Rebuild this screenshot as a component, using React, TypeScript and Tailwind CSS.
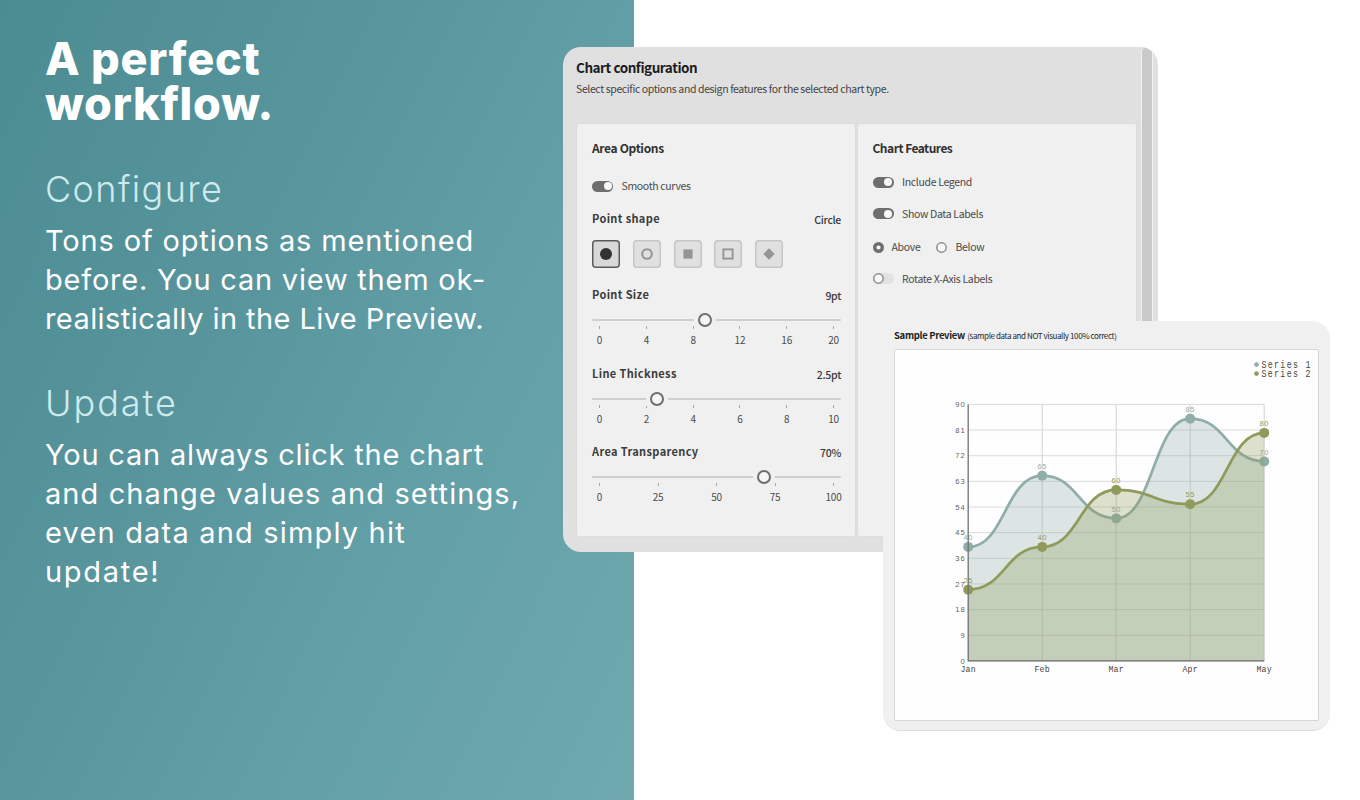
import type { ReactNode } from 'react'

interface SliderProps {
  label: string
  value: string
  percent: number
  ticks: number[]
}

interface Series {
  name: string
  color: string
  values: number[]
}

const months = ['Jan', 'Feb', 'Mar', 'Apr', 'May']

const series: Series[] = [
  { name: 'Series 1', color: '#8fada9', values: [40, 65, 50, 85, 70] },
  { name: 'Series 2', color: '#8f9a5b', values: [25, 40, 60, 55, 80] },
]

const PLOT = { left: 73.2, top: 54.4, width: 296, height: 256.5, max: 90 }

const xAt = (i: number) => PLOT.left + (i * PLOT.width) / (months.length - 1)
const yAt = (v: number) => PLOT.top + PLOT.height * (1 - v / PLOT.max)

// Smooth line with horizontal tangents at every point
function curve(values: number[]) {
  return values.reduce((d, v, i) => {
    if (i === 0) return `M${xAt(0)},${yAt(v)}`
    const mid = (xAt(i - 1) + xAt(i)) / 2
    return `${d} C${mid},${yAt(values[i - 1])} ${mid},${yAt(v)} ${xAt(i)},${yAt(v)}`
  }, '')
}

function Switch({ on }: { on: boolean }) {
  return on ? (
    <span className="flex h-[11px] w-[21px] shrink-0 items-center justify-end rounded-full bg-[#6e6e6e] pr-[1.5px]">
      <span className="size-[8px] rounded-full bg-[#fafafa]" />
    </span>
  ) : (
    <span className="flex h-[11px] w-[21px] shrink-0 items-center rounded-full bg-[#e2e2e2]">
      <svg width="11" height="11" viewBox="0 0 11 11">
        <circle cx="5.5" cy="5.5" r="4.7" fill="#fafafa" stroke="#8c8c8c" strokeWidth="1.5" />
      </svg>
    </span>
  )
}

function SwitchRow({ on, children }: { on: boolean; children: ReactNode }) {
  return (
    <div className="flex h-4 items-center gap-[8.5px]">
      <Switch on={on} />
      <span className="text-[10.5px] leading-4 tracking-[-0.34px] text-[#4a4a4a]">{children}</span>
    </div>
  )
}

function Radio({ on, label }: { on: boolean; label: string }) {
  return (
    <div className="flex items-center gap-2">
      <svg width="11" height="11" viewBox="0 0 11 11">
        {on ? (
          <circle cx="5.5" cy="5.5" r="3.8" fill="#fafafa" stroke="#6e6e6e" strokeWidth="3.4" />
        ) : (
          <circle cx="5.5" cy="5.5" r="4.7" fill="#fafafa" stroke="#8c8c8c" strokeWidth="1.5" />
        )}
      </svg>
      <span className="text-[10.5px] leading-4 tracking-[-0.3px] text-[#4a4a4a]">{label}</span>
    </div>
  )
}

function ShapeButton({ selected, children }: { selected?: boolean; children: ReactNode }) {
  return (
    <button
      className={
        selected
          ? 'flex size-[28px] items-center justify-center rounded-[4px] bg-[#d8d8d8] text-[#323232] inset-ring-[1.5px] inset-ring-[#5a5a5a]'
          : 'flex size-[28px] items-center justify-center rounded-[4px] bg-[#e0e0e0] text-[#959595] inset-ring-[1.5px] inset-ring-[#c6c6c6]'
      }
    >
      <svg width="14" height="14" viewBox="0 0 14 14">
        {children}
      </svg>
    </button>
  )
}

function OptionLabel({ label, value }: { label: string; value: string }) {
  return (
    <div className="flex h-[18px] justify-between">
      <span className="text-[11px] font-bold leading-4 tracking-[0.36px] text-[#3c3c3c]">{label}</span>
      <span className="pt-[2px] text-[10.5px] font-medium leading-4 tracking-[-0.3px] text-[#383838]">{value}</span>
    </div>
  )
}

function Slider({ label, value, percent, ticks }: SliderProps) {
  return (
    <div className="h-[78.3px]">
      <OptionLabel label={label} value={value} />
      <div className="relative mt-[15px] h-[2px] rounded bg-[#cfcfcf]">
        <span
          className="absolute -top-[6px] flex h-[14px] w-[22px] -translate-x-1/2 justify-center bg-[#f0f0f0]"
          style={{ left: `${percent}%` }}
        >
          <span className="size-[14px] rounded-full border-2 border-[#6e6e6e] bg-[#f6f6f6]" />
        </span>
      </div>
      <div className="flex justify-between px-[7.5px] pt-[5px]">
        {ticks.map((t) => (
          <span key={t} className="flex w-0 flex-col items-center">
            <span className="h-[3px] w-px bg-[#a8a8a8]" />
            <span className="mt-[3px] text-[10px] leading-4 tracking-[-0.2px] text-[#4c4c4c]">{t}</span>
          </span>
        ))}
      </div>
    </div>
  )
}

function AreaOptions() {
  return (
    <section className="w-[280px] rounded-[3px] border border-[#dcdcdc] bg-[#f0f0f0] pl-[15px] pr-[14px] pt-[16px]">
      <h3 className="text-[12px] font-bold leading-4 tracking-[-0.34px] text-[#323232]">Area Options</h3>
      <div className="mt-[22px]">
        <SwitchRow on>Smooth curves</SwitchRow>
      </div>
      <div className="mt-[16px]">
        <OptionLabel label="Point shape" value="Circle" />
      </div>
      <div className="mt-[12px] flex gap-[12.8px]">
        <ShapeButton selected>
          <circle cx="7" cy="7" r="6" fill="currentColor" />
        </ShapeButton>
        <ShapeButton>
          <circle cx="7" cy="7" r="4.8" fill="none" stroke="currentColor" strokeWidth="2.1" />
        </ShapeButton>
        <ShapeButton>
          <rect x="2.4" y="2.4" width="9.2" height="9.2" fill="currentColor" />
        </ShapeButton>
        <ShapeButton>
          <rect x="2.4" y="2.4" width="9.2" height="9.2" fill="none" stroke="currentColor" strokeWidth="1.9" />
        </ShapeButton>
        <ShapeButton>
          <path d="M7 1.3 12.7 7 7 12.7 1.3 7Z" fill="currentColor" />
        </ShapeButton>
      </div>
      <div className="mt-[18.4px]">
        <Slider label="Point Size" value="9pt" percent={45.2} ticks={[0, 4, 8, 12, 16, 20]} />
        <Slider label="Line Thickness" value="2.5pt" percent={26.3} ticks={[0, 2, 4, 6, 8, 10]} />
        <Slider label="Area Transparency" value="70%" percent={69} ticks={[0, 25, 50, 75, 100]} />
      </div>
    </section>
  )
}

function ChartFeatures() {
  return (
    <section className="w-[280px] rounded-[3px] border border-[#dcdcdc] bg-[#f0f0f0] px-[14.5px] pt-[16px]">
      <h3 className="text-[12px] font-bold leading-4 tracking-[-0.5px] text-[#323232]">Chart Features</h3>
      <div className="mt-[18px] flex flex-col gap-[15.6px]">
        <SwitchRow on>Include Legend</SwitchRow>
        <SwitchRow on>Show Data Labels</SwitchRow>
        <div className="mt-[2px] flex h-4 items-center gap-[16px]">
          <Radio on label="Above" />
          <Radio on={false} label="Below" />
        </div>
        <SwitchRow on={false}>Rotate X-Axis Labels</SwitchRow>
      </div>
    </section>
  )
}

function ConfigWindow() {
  return (
    <div className="absolute left-[563px] top-[47px] flex h-[505px] w-[595px] overflow-hidden rounded-[18px] bg-[#e0e0e0] font-['Noto_Sans_CJK_SC',sans-serif]">
      <div className="flex w-[578px] flex-col pl-[13px]">
        <h2 className="mt-[10px] text-[13.5px] font-bold leading-5 tracking-[-0.45px] text-[#1c1c1c]">Chart configuration</h2>
        <p className="mt-[4px] text-[10.5px] leading-4 tracking-[-0.38px] text-[#444]">
          Select specific options and design features for the selected chart type.
        </p>
        <div className="mt-[26px] flex h-[414px] gap-px">
          <AreaOptions />
          <ChartFeatures />
        </div>
      </div>
      <div className="w-[12px] rounded-t-[5px] border-x border-[#f2f2f2] bg-[#c9c9c9]" />
    </div>
  )
}

function Chart() {
  const steps = [0, 9, 18, 27, 36, 45, 54, 63, 72, 81, 90]
  const bottom = yAt(0)
  return (
    <svg width="423" height="371" viewBox="0 0 423 371" className="font-['Liberation_Sans',sans-serif]">
      {steps.map((v) => (
        <g key={v}>
          <path d={`M${PLOT.left} ${yAt(v)}H${xAt(4)}`} stroke="#dadada" />
          <text x={PLOT.left - 2.5} y={yAt(v) + 2.7} textAnchor="end" fontSize="7.6" letterSpacing="1" fill="#5f5f5f">
            {v}
          </text>
        </g>
      ))}
      {months.map((m, i) => (
        <path key={m} d={`M${xAt(i)} ${PLOT.top}V${bottom}`} stroke="#d2d2d2" />
      ))}
      {series.map((s) => (
        <g key={s.name}>
          <path d={`${curve(s.values)} V${bottom} H${PLOT.left} Z`} fill={s.color} fillOpacity="0.3" />
          <path d={curve(s.values)} fill="none" stroke={s.color} strokeWidth="2.7" />
          {s.values.map((v, i) => (
            <g key={i}>
              <circle cx={xAt(i)} cy={yAt(v)} r="5" fill={s.color} />
              <text x={xAt(i)} y={yAt(v) - 6.8} textAnchor="middle" fontSize="7.4" letterSpacing="0.6" fill={s.color}>
                {v}
              </text>
            </g>
          ))}
        </g>
      ))}
      <path d={`M${PLOT.left} ${PLOT.top}V${bottom}H${xAt(4)}`} fill="none" stroke="#6f6f6f" strokeWidth="1.2" />
      <g className="font-['Liberation_Mono',monospace]" fill="#444">
        {months.map((m, i) => (
          <text key={m} x={xAt(i)} y={bottom + 10.6} textAnchor="middle" fontSize="8.2" letterSpacing="0.3">
            {m}
          </text>
        ))}
        {series.map((s, i) => (
          <g key={s.name}>
            <circle cx="361.5" cy={14.6 + i * 9} r="2.3" fill={s.color} />
            <text transform={`translate(366.5 ${18.4 + i * 9}) scale(0.76 1)`} fontSize="10.8" letterSpacing="1.8">
              {s.name}
            </text>
          </g>
        ))}
      </g>
    </svg>
  )
}

function PreviewWindow() {
  return (
    <div className="absolute left-[883px] top-[321px] h-[410px] w-[447px] rounded-[18px] border-b border-[#dedede] bg-[#f0f0f0] px-[11px] font-['Noto_Sans_CJK_SC',sans-serif]">
      <p className="flex h-7 items-center gap-[2.5px] whitespace-nowrap text-[#1f1f1f]">
        <span className="text-[9.5px] font-bold tracking-[-0.33px]">Sample Preview</span>
        <span className="pt-px text-[8px] tracking-[-0.39px]">(sample data and NOT visually 100% correct)</span>
      </p>
      <div className="h-[372px] w-[425px] overflow-hidden rounded-[2px] border border-[#d6d6d6] bg-[#fefefe]">
        <Chart />
      </div>
    </div>
  )
}

function Intro() {
  return (
    <div className="h-[800px] w-[634px] bg-linear-[116deg,#4a8c91_0%,#59959d_38%,#629fa6_64%,#70a9b0_100%] pl-[45px] font-[Inter,sans-serif] text-white">
      <h1 className="pt-[36px] text-[45px] font-extrabold leading-[45px] tracking-[0.75px]">
        <span className="block">A perfect</span>
        <span className="block">workflow.</span>
      </h1>
      <h2 className="mt-[40px] text-[36px] font-light leading-[46px] tracking-[1.4px] text-[#cdebee]">Configure</h2>
      <p className="mt-[9px] text-[29px] leading-[39px]">
        <span className="block tracking-[0.85px]">Tons of options as mentioned</span>
        <span className="block tracking-[0.78px]">before. You can view them ok-</span>
        <span className="block tracking-[0.42px]">realistically in the Live Preview.</span>
      </p>
      <h2 className="mt-[42px] text-[36px] font-light leading-[46px] tracking-[2px] text-[#cdebee]">Update</h2>
      <p className="mt-[9px] text-[29px] leading-[39px]">
        <span className="block tracking-[0.8px]">You can always click the chart</span>
        <span className="block tracking-[1.08px]">and change values and settings,</span>
        <span className="block tracking-[1.18px]">even data and simply hit</span>
        <span className="block tracking-[1.7px]">update!</span>
      </p>
    </div>
  )
}

export default function App() {
  return (
    <main className="relative h-[800px] w-[1360px] overflow-hidden bg-white">
      <Intro />
      <ConfigWindow />
      <PreviewWindow />
    </main>
  )
}
